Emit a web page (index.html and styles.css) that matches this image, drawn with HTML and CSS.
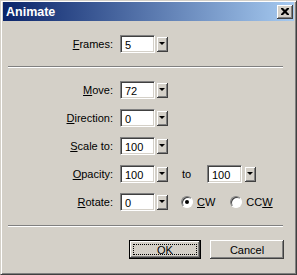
FILE: index.html
```html
<!DOCTYPE html>
<html>
<head>
<meta charset="utf-8">
<link rel="stylesheet" href="styles.css">
</head>
<body>
<div class="window">
  <div class="titlebar">
    <span class="title">Animate</span>
    <span class="close"><svg width="8" height="7" viewBox="0 0 8 7"><path d="M0 0h2l2 2 2-2h2v1l-2.5 2.5L8 6v1H6L4 5 2 7H0V6l2.5-2.5L0 1z" fill="#000"/></svg></span>
  </div>
  <div class="content">
    <div class="row">
      <span class="label"><u>F</u>rames:</span>
      <span class="field">5</span>
      <span class="drop"><i></i></span>
    </div>
    <div class="sep"></div>
    <div class="rows">
      <div class="row">
        <span class="label"><u>M</u>ove:</span>
        <span class="field">72</span>
        <span class="drop"><i></i></span>
      </div>
      <div class="row">
        <span class="label"><u>D</u>irection:</span>
        <span class="field">0</span>
        <span class="drop"><i></i></span>
      </div>
      <div class="row">
        <span class="label"><u>S</u>cale to:</span>
        <span class="field">100</span>
        <span class="drop"><i></i></span>
      </div>
      <div class="row">
        <span class="label"><u>O</u>pacity:</span>
        <span class="field">100</span>
        <span class="drop"><i></i></span>
        <span class="to">to</span>
        <span class="field">100</span>
        <span class="drop drop-to"><i></i></span>
      </div>
      <div class="row">
        <span class="label"><u>R</u>otate:</span>
        <span class="field">0</span>
        <span class="drop"><i></i></span>
        <span class="radio checked"><span class="circle"></span><span><u>C</u>W</span></span>
        <span class="radio"><span class="circle"></span><span>CC<u>W</u></span></span>
      </div>
    </div>
    <div class="sep sep2"></div>
    <div class="buttons">
      <span class="btn default"><span class="focus">OK</span></span>
      <span class="btn">Cancel</span>
    </div>
  </div>
</div>
</body>
</html>
```
FILE: styles.css
```css
html, body {
  margin: 0;
  padding: 0;
  background: #d4d0c8;
}
body {
  font-family: "Liberation Sans", Arial, sans-serif;
  font-size: 11px;
  color: #000;
}
.window {
  width: 297px;
  height: 275px;
  box-sizing: border-box;
  background: #d4d0c8;
  border: 1px solid;
  border-color: #d4d0c8 #404040 #404040 #d4d0c8;
  box-shadow: inset 1px 1px #fff, inset -1px -1px #808080;
  padding: 1px 2px 2px 2px;
  display: flex;
  flex-direction: column;
}
.titlebar {
  height: 19px;
  background: linear-gradient(to right, #0a246a 0%, #a6caf0 100%);
  display: flex;
  align-items: center;
  justify-content: space-between;
  padding: 0 1px 0 3px;
  color: #fff;
  font-weight: bold;
  font-size: 12.5px;
}
.close {
  width: 16px;
  height: 14px;
  box-sizing: border-box;
  background: #d4d0c8;
  box-shadow: inset -1px -1px #404040, inset 1px 1px #fff, inset -2px -2px #808080;
  display: flex;
  align-items: center;
  justify-content: center;
}
.content {
  padding-top: 14px;
  display: flex;
  flex-direction: column;
}
.row {
  height: 18px;
  display: flex;
  align-items: center;
}
.label {
  width: 110px;
  text-align: right;
  margin-right: 7px;
}
.field {
  width: 35px;
  height: 18px;
  box-sizing: border-box;
  background: #fff;
  border: 1px solid;
  border-color: #808080 #fff #fff #808080;
  box-shadow: inset 1px 1px #404040, inset -1px -1px #d4d0c8;
  padding: 3px 0 0 4px;
  line-height: 12px;
}
.drop {
  width: 11px;
  height: 15px;
  margin-left: 2px;
  box-sizing: border-box;
  background: #d4d0c8;
  box-shadow: inset -1px -1px #404040, inset 1px 1px #fff, inset -2px -2px #808080;
  display: flex;
  align-items: center;
  justify-content: center;
}
.drop i {
  width: 0;
  height: 0;
  border-left: 3px solid transparent;
  border-right: 3px solid transparent;
  border-top: 3px solid #000;
  margin: 0 1px 1px 0;
}
.to {
  margin-left: 14px;
  width: 25px;
}
.drop-to {
  margin-left: 3px;
}
.sep {
  height: 2px;
  margin: 13px 11px 0 5px;
  border-top: 1px solid #808080;
  border-bottom: 1px solid #fff;
  box-sizing: border-box;
}
.sep2 {
  margin-top: 14px;
}
.rows {
  margin-top: 13px;
  display: flex;
  flex-direction: column;
  gap: 10px;
}
.radio {
  display: flex;
  align-items: center;
  gap: 4px;
  margin-left: 13px;
}
.radio + .radio {
  margin-left: 15px;
}
.circle {
  width: 12px;
  height: 12px;
  box-sizing: border-box;
  border-radius: 50%;
  background: #fff;
  border: 1px solid;
  border-color: #808080 #fff #fff #808080;
  box-shadow: inset 1px 1px #404040;
  position: relative;
}
.checked .circle::after {
  content: "";
  position: absolute;
  left: 3px;
  top: 3px;
  width: 4px;
  height: 4px;
  border-radius: 50%;
  background: #000;
}
.buttons {
  margin-top: 13px;
  display: flex;
  justify-content: flex-end;
  gap: 9px;
  padding-right: 10px;
}
.btn {
  width: 74px;
  height: 19px;
  box-sizing: border-box;
  background: #d4d0c8;
  box-shadow: inset -1px -1px #404040, inset 1px 1px #fff, inset -2px -2px #808080;
  display: flex;
  align-items: center;
  justify-content: center;
}
.btn.default {
  width: 72px;
  border: 1px solid #000;
  padding: 3px;
}
.focus {
  flex: 1;
  align-self: stretch;
  border: 1px dotted #000;
  display: flex;
  align-items: center;
  justify-content: center;
}
```
